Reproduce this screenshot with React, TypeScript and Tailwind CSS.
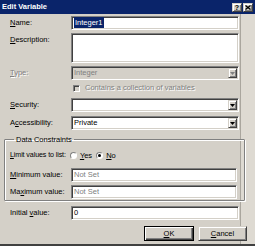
import type { ReactNode } from "react";

const SUNKEN =
  "border border-t-[#808080] border-l-[#808080] border-b-white border-r-white shadow-[inset_1px_1px_0_#404040,inset_-1px_-1px_0_#d4d0c8]";
const RAISED =
  "border border-t-[#d4d0c8] border-l-[#d4d0c8] border-b-[#404040] border-r-[#404040] shadow-[inset_1px_1px_0_#ffffff,inset_-1px_-1px_0_#808080]";

function Arrow({ disabled }: { disabled?: boolean }) {
  return (
    <div className={`flex h-[10px] w-[9px] items-center justify-center bg-[#d4d0c8] ${RAISED}`}>
      <svg width="5" height="3" viewBox="0 0 5 3">
        <path d="M0 0h5L2.5 3z" fill={disabled ? "#808080" : "#000"} />
      </svg>
    </div>
  );
}

function Field({
  label,
  children,
  disabled,
  width = "w-[168px]",
  combo,
  value,
}: {
  label: ReactNode;
  children?: ReactNode;
  disabled?: boolean;
  width?: string;
  combo?: boolean;
  value?: ReactNode;
}) {
  return (
    <div className="flex h-[14px] items-center">
      <span
        className={`w-[61px] whitespace-nowrap ${disabled ? "text-[#808080] [text-shadow:1px_1px_0_#fff]" : ""}`}
      >
        {label}
      </span>
      <div
        className={`flex h-[14px] ${width} items-center justify-between pl-[2px] pr-[1px] ${SUNKEN} ${
          disabled ? "bg-[#d4d0c8] text-[#808080]" : "bg-white"
        }`}
      >
        <span className="whitespace-nowrap leading-none">{value ?? children}</span>
        {combo && <Arrow disabled={disabled} />}
      </div>
    </div>
  );
}

function Radio({ checked }: { checked?: boolean }) {
  return (
    <span className="flex h-[7px] w-[7px] items-center justify-center rounded-full border border-t-[#808080] border-l-[#808080] border-b-white border-r-white bg-white">
      {checked && <span className="h-[3px] w-[3px] rounded-full bg-black" />}
    </span>
  );
}

export default function App() {
  return (
    <div className="flex h-[246px] w-[255px] flex-col overflow-hidden bg-[#d4d0c8] font-['Liberation_Sans',Arial,sans-serif] text-[7.5px] text-black">
      {/* title bar */}
      <div className="flex h-[14px] items-center justify-between bg-[#0a246a] pl-[2px] pr-[2px]">
        <span className="text-[7.5px] font-bold text-white">Edit Variable</span>
        <div className="flex gap-[1px]">
          <span className={`flex h-[9px] w-[10px] items-center justify-center bg-[#d4d0c8] text-[7px] font-bold leading-none ${RAISED}`}>
            ?
          </span>
          <span className={`flex h-[9px] w-[10px] items-center justify-center bg-[#d4d0c8] ${RAISED}`}>
            <svg width="6" height="5" viewBox="0 0 6 5">
              <path d="M0.5 0.5l5 4M5.5 0.5l-5 4" stroke="#000" strokeWidth="1.3" />
            </svg>
          </span>
        </div>
      </div>

      {/* body */}
      <div className="flex flex-1 flex-col border-b-2 border-b-[#404040] bg-[linear-gradient(to_right,#d4d0c8_240px,#aaa69e_240px,#aaa69e_241px,#dedad2_241px)] pl-[10px] pt-[2px]">
        <div className="flex flex-col gap-[3px]">
          <Field label={<><u>N</u>ame:</>}>
            <span className="bg-[#0a246a] px-[1px] py-[1px] text-white">Integer1</span>
          </Field>

          <div className="flex items-start">
            <span className="w-[61px] pt-[1px]">
              <u>D</u>escription:
            </span>
            <div className={`h-[30px] w-[168px] bg-white ${SUNKEN}`} />
          </div>

          <Field label={<><u>T</u>ype:</>} disabled combo value="Integer" />
        </div>

        <div className="flex h-[16px] items-center pl-[63px] text-[#808080]">
          <span className={`mr-[5px] h-[7px] w-[7px] bg-[#d4d0c8] ${SUNKEN}`} />
          <span className="whitespace-nowrap [text-shadow:1px_1px_0_#fff]">Contains a collection of variables</span>
        </div>

        <div className="mt-[2px] flex flex-col gap-[4px]">
          <Field label={<><u>S</u>ecurity:</>} combo value="" />
          <Field label={<>A<u>c</u>cessibility:</>} combo value="Private" />
        </div>

        <fieldset className="-ml-[6px] mt-[5px] w-[241px] rounded-[1px] border border-[#808080] pb-[1px] pl-[5px] pt-[6px] shadow-[1px_1px_0_#fff,inset_1px_1px_0_#fff]">
          <legend className="ml-[4px] px-[2px] leading-[9px]">Data Constraints</legend>
          <div className="flex h-[11px] items-center">
            <span className="mr-[4px] whitespace-nowrap text-[7.1px] tracking-[-0.1px]">
              <u>L</u>imit values to list:
            </span>
            <span className="flex items-center gap-[3px]">
              <Radio />
              <span>
                <u>Y</u>es
              </span>
            </span>
            <span className="ml-[4px] flex items-center gap-[3px]">
              <Radio checked />
              <span>
                <u>N</u>o
              </span>
            </span>
          </div>
          <div className="mt-[7px] flex flex-col gap-[3px]">
            <Field label={<><u>M</u>inimum value:</>} width="w-[166px]" value={<span className="text-[#808080]">Not Set</span>} />
            <Field label={<>Ma<u>x</u>imum value:</>} width="w-[166px]" value={<span className="text-[#808080]">Not Set</span>} />
          </div>
        </fieldset>

        <div className="mt-[5px]">
          <Field label={<>Initial <u>v</u>alue:</>} value="0" />
        </div>

        <div className="mt-[6px] flex justify-end gap-[4px] pr-[8px]">
          <button className="flex h-[15px] w-[50px] items-center justify-center border border-black bg-[#d4d0c8] shadow-[inset_1px_1px_0_#fff,inset_-1px_-1px_0_#404040,inset_-2px_-2px_0_#808080]">
            <u>O</u>K
          </button>
          <button className={`flex h-[15px] w-[49px] items-center justify-center bg-[#d4d0c8] ${RAISED}`}>
            <u>C</u>ancel
          </button>
        </div>
      </div>
    </div>
  );
}
